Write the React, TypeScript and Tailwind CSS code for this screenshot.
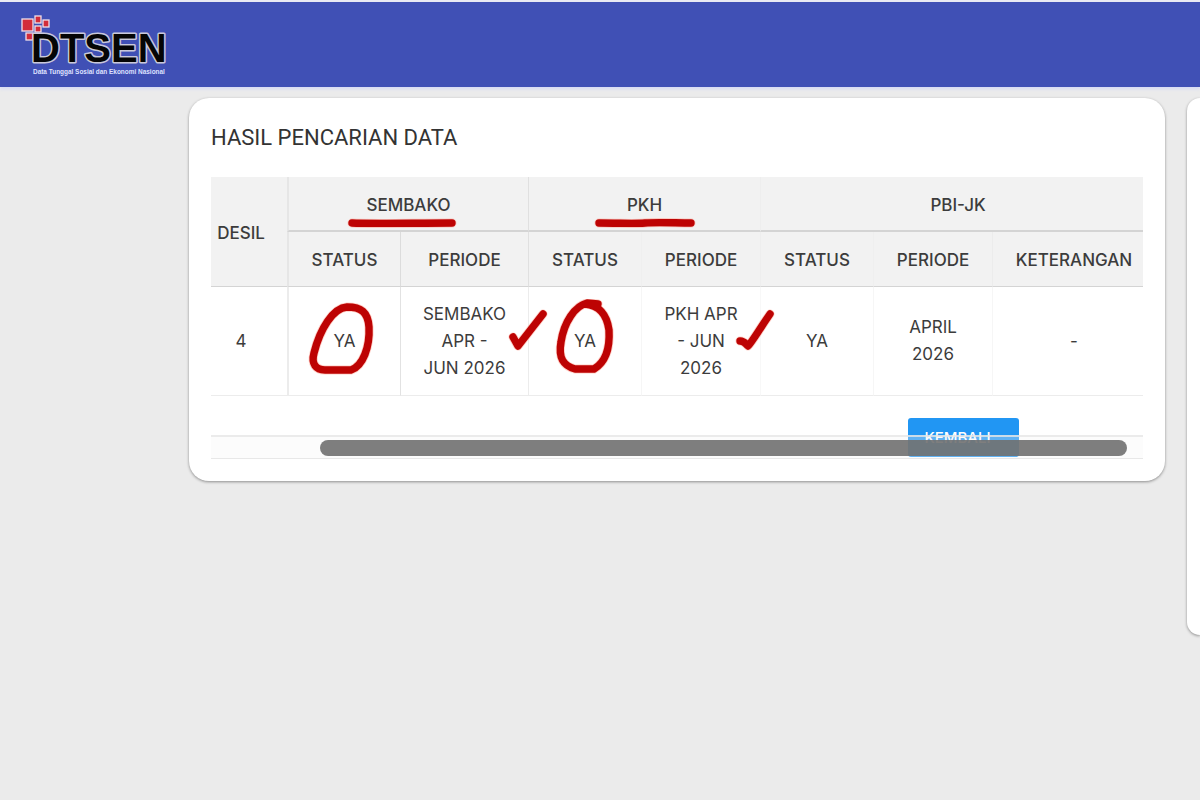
import type { ReactNode } from "react";

const ink = "#bd0303";

function Stroke({ d }: { d: string }) {
  return (
    <>
      <path d={d} fill="none" stroke="#ff9c8a" strokeOpacity="0.5" strokeWidth="9" strokeLinecap="round" strokeLinejoin="round" />
      <path d={d} fill="none" stroke={ink} strokeWidth="7.4" strokeLinecap="round" strokeLinejoin="round" />
    </>
  );
}

function Underline({ d }: { d: string }) {
  return (
    <svg aria-hidden="true" className="pointer-events-none absolute left-1/2 top-10 z-10 h-3 w-32 -translate-x-1/2" viewBox="0 0 128 12">
      <Stroke d={d} />
    </svg>
  );
}

function Mark({ d, className, viewBox }: { d: string; className: string; viewBox: string }) {
  return (
    <svg aria-hidden="true" className={"pointer-events-none absolute z-10 " + className} viewBox={viewBox}>
      <Stroke d={d} />
    </svg>
  );
}

function Head({ children, className = "", colSpan, rowSpan }: { children: ReactNode; className?: string; colSpan?: number; rowSpan?: number }) {
  return (
    <th colSpan={colSpan} rowSpan={rowSpan} scope={colSpan ? "colgroup" : "col"} className={"relative h-[55px] px-0 pb-0 pt-[3px] text-center font-medium " + className}>
      {children}
    </th>
  );
}

function Cell({ children, className = "" }: { children: ReactNode; className?: string }) {
  return <td className={"relative h-[109px] border-b border-[#ececec] p-0 text-center " + className}>{children}</td>;
}

function Logo() {
  return (
    <svg role="img" aria-label="DTSEN" className="h-[66px] w-[150px]" viewBox="20 12 150 66">
      <g fill="#d22c3a" stroke="#f1dfe8" strokeWidth="1.3">
        <rect x="22" y="19" width="11" height="12" />
        <rect x="35" y="16" width="6" height="7" />
        <rect x="43" y="20" width="6" height="7" />
        <rect x="35" y="26" width="6" height="6" />
        <rect x="26" y="33" width="7" height="7" />
      </g>
      <text x="31" y="62" fontFamily="Liberation Sans, Arial, sans-serif" fontWeight="700" fontSize="40" fill="#050505" stroke="#c9c8da" strokeWidth="3" strokeLinejoin="round" paintOrder="stroke">
        DTSEN
      </text>
      <text x="33" y="74" fontFamily="Liberation Sans, Arial, sans-serif" fontWeight="700" fontSize="6.45" fill="#dfe2ff">
        Data Tunggal Sosial dan Ekonomi Nasional
      </text>
    </svg>
  );
}

export default function App() {
  return (
    <div className="min-h-screen bg-[#ebebeb] font-['Inter',sans-serif] text-[17px] leading-[27px] text-[#3c3c3c]">
      <header className="flex h-[87px] items-start border-t-2 border-[#e9eaf3] bg-[#4050b5] pl-5 pt-[10px] shadow-[0_2px_3px_#d5daf5]">
        <Logo />
      </header>

      <main className="flex items-start gap-[22px] pl-[189px] pt-[11px]">
        <section className="min-w-0 flex-1 rounded-[20px] bg-white px-[22px] pb-[22px] pt-6 shadow-[0_1px_3px_rgba(0,0,0,0.4)]">
          <h1 className="font-['Roboto',sans-serif] text-[22px] leading-[31px] text-[#333333]">HASIL PENCARIAN DATA</h1>

          <div className="relative mt-6">
            <table className="w-full table-fixed border-separate border-spacing-0">
              <colgroup>
                <col className="w-[76px]" />
                <col className="w-[113px]" />
                <col className="w-[128px]" />
                <col className="w-[113px]" />
                <col className="w-[119px]" />
                <col className="w-[113px]" />
                <col className="w-[119px]" />
                <col />
              </colgroup>
              <thead className="bg-[#f2f2f2]">
                <tr>
                  <Head rowSpan={2} className="border-b border-[#d4d4d4] pr-4">DESIL</Head>
                  <Head colSpan={2} className="border-b-2 border-l-2 border-b-[#d4d4d4] border-l-[#e6e6e6]">
                    SEMBAKO
                    <Underline d="M7 6 C25 7 70 6 107 6" />
                  </Head>
                  <Head colSpan={2} className="border-b-2 border-l border-b-[#d4d4d4] border-l-[#e0e0e0]">
                    PKH
                    <Underline d="M18 6 C40 6 52 7 64 6 S95 6 110 6" />
                  </Head>
                  <Head colSpan={3} className="border-b-2 border-l border-b-[#d4d4d4] border-l-[#eeeeee] pl-3">PBI-JK</Head>
                </tr>
                <tr>
                  <Head className="border-b border-l-2 border-b-[#d4d4d4] border-l-[#e6e6e6]">STATUS</Head>
                  <Head className="border-b border-l border-b-[#d4d4d4] border-l-[#dcdcdc]">PERIODE</Head>
                  <Head className="border-b border-l border-b-[#d4d4d4] border-l-[#e0e0e0]">STATUS</Head>
                  <Head className="border-b border-l border-b-[#d4d4d4] border-l-[#efefef]">PERIODE</Head>
                  <Head className="border-b border-l border-b-[#d4d4d4] border-l-[#eeeeee]">STATUS</Head>
                  <Head className="border-b border-l border-b-[#d4d4d4] border-l-[#efefef]">PERIODE</Head>
                  <Head className="border-b border-l border-b-[#d4d4d4] border-l-[#ececec] pl-3">KETERANGAN</Head>
                </tr>
              </thead>
              <tbody>
                <tr>
                  <Cell className="pr-4">4</Cell>
                  <Cell className="border-l-2 border-l-[#ececec]">
                    YA
                    <Mark className="left-4 top-3 h-20 w-20" viewBox="304 299 80 80" d="M346 307 C332 308 319 329 313 353 C310 364 315 370 324 370 L350 370 C362 366 369 347 368 327 C367 312 360 307 346 307 Z" />
                  </Cell>
                  <Cell className="border-l border-l-[#e2e2e2]">
                    SEMBAKO<br />APR -<br />JUN 2026
                    <Mark className="-right-5 top-4 z-20 h-14 w-11" viewBox="504 303 44 56" d="M513 337 L518 346 L543 314" />
                  </Cell>
                  <Cell className="border-l border-l-[#ececec]">
                    YA
                    <Mark className="left-5 top-3 h-20 w-20" viewBox="549 299 80 80" d="M598 304 L587 303 C575 306 564 322 561 342 C558 359 564 366 575 369 L594 369 C606 362 610 348 609 330 C607 315 599 305 585 304" />
                  </Cell>
                  <Cell className="border-l border-l-[#f6f6f6]">
                    PKH APR<br />- JUN<br />2026
                    <Mark className="-right-4 top-4 z-20 h-14 w-11" viewBox="732 303 44 56" d="M740 341 C744 341 745 343 748 346 C752 342 757 333 770 314" />
                  </Cell>
                  <Cell className="border-l border-l-[#f8f8f8]">YA</Cell>
                  <Cell className="border-l border-l-[#f6f6f6]">APRIL<br />2026</Cell>
                  <Cell className="border-l border-l-[#f6f6f6] pl-3">-</Cell>
                </tr>
              </tbody>
            </table>

            <div className="flex h-[63px] justify-end pr-[124px] pt-[22px]">
              <button type="button" className="h-[39px] w-[111px] rounded-[3px] bg-[#2196f3] pr-3 text-[15px] leading-[18px] font-medium text-white">
                KEMBALI
              </button>
            </div>

            <div className="absolute inset-x-0 bottom-0 z-10 h-6 border-b border-t-2 border-b-[#e8e8e8] border-t-[#e6e6e6]/80 bg-[#f4f4f4]/30">
              <div className="ml-[109px] mr-[16px] mt-[3px] h-4 rounded-full bg-[#707070]/90" />
            </div>
          </div>
        </section>

        <aside className="h-[537px] w-[13px] shrink-0 rounded-l-[20px] bg-white shadow-[0_1px_3px_rgba(0,0,0,0.4)]" />
      </main>
    </div>
  );
}
